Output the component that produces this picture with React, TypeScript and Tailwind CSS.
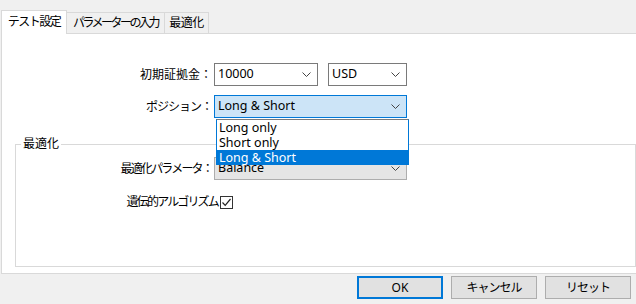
import React from "react";

const Chevron = () => (
  <svg width="9" height="5" viewBox="0 0 9 5" className="shrink-0">
    <path d="M0.5 0.5 L4.5 4.5 L8.5 0.5" fill="none" stroke="#444" strokeWidth="1" />
  </svg>
);

function Combo({ value, width, variant = "normal" }: { value: string; width: number; variant?: "normal" | "focus" | "disabled" }) {
  const cls =
    variant === "focus"
      ? "bg-[#cce4f7] border-[#0078d7]"
      : variant === "disabled"
      ? "bg-[#e5e5e5] border-[#adadad]"
      : "bg-white border-[#7a7a7a]";
  return (
    <div
      className={`h-[23px] border flex items-center justify-between pl-[3px] pr-[6px] ${cls}`}
      style={{ width }}
    >
      <span className="text-[12.5px] text-[#000] leading-none whitespace-nowrap">{value}</span>
      <Chevron />
    </div>
  );
}

export default function App() {
  return (
    <div
      className="w-[636px] h-[304px] bg-[#f0f0f0] overflow-hidden flex flex-col text-black"
      style={{ fontFamily: '"Noto Sans", "Noto Sans CJK JP", sans-serif' }}
    >
      {/* tabs */}
      <div className="h-[33px] flex items-end pl-[1px] relative z-10">
        <div className="h-[24px] w-[66px] bg-white border border-b-0 border-[#d9d9d9] flex items-center justify-center text-[12px] tracking-[-1.5px] whitespace-nowrap -mb-[1px] pb-[2px]">
          テスト設定
        </div>
        <div className="h-[21px] w-[98px] bg-[#f0f0f0] border border-l-0 border-b-0 border-[#d9d9d9] flex items-center justify-center text-[12px] tracking-[-2.5px] whitespace-nowrap">
          パラメーターの入力
        </div>
        <div className="h-[21px] w-[44px] bg-[#f0f0f0] border border-l-0 border-b-0 border-[#d9d9d9] flex items-center justify-center text-[12px] tracking-[-0.5px] whitespace-nowrap">
          最適化
        </div>
      </div>

      {/* panel */}
      <div className="ml-[1px] w-[640px] h-[241px] bg-white border border-[#d9d9d9] relative flex flex-col">
        <div className="pt-[29px] flex flex-col gap-[9px]">
          <div className="flex items-center">
            <div className="w-[212px] text-right text-[12px] pr-[2px] whitespace-nowrap">初期証拠金：</div>
            <Combo value="10000" width={104} />
            <div className="w-[10px]" />
            <Combo value="USD" width={79} />
          </div>
          <div className="flex items-center">
            <div className="w-[212px] text-right text-[12px] pr-[2px] tracking-[-1px] whitespace-nowrap">ポジション：</div>
            <Combo value="Long & Short" width={193} variant="focus" />
          </div>
        </div>

        {/* group box */}
        <div className="mt-[26px] ml-[13px] w-[621px] h-[123px] border border-[#d9d9d9] relative flex flex-col">
          <span className="absolute -top-[9px] left-[5px] bg-white px-[2px] text-[12px] leading-[16px] whitespace-nowrap">最適化</span>
          <div className="mt-[12px] flex items-center">
            <div className="w-[198px] text-right text-[12px] pr-[2px] tracking-[-1.8px] whitespace-nowrap">最適化パラメータ：</div>
            <Combo value="Balance" width={193} variant="disabled" />
          </div>
          <div className="mt-[13px] flex items-center">
            <div className="w-[202px] text-right text-[12px] tracking-[-1.8px] whitespace-nowrap">遺伝的アルゴリズム</div>
            <div className="w-[13px] h-[13px] border border-[#333] bg-white flex items-center justify-center ml-[2px]">
              <svg width="11" height="11" viewBox="0 0 11 11">
                <path d="M1.5 5.5 L4.2 8.3 L9.5 2" fill="none" stroke="#222" strokeWidth="1.2" />
              </svg>
            </div>
          </div>
        </div>

        {/* dropdown list overlay */}
        <div className="absolute left-[214px] top-[85px] w-[193px] h-[46px] bg-white border border-[#0078d7] border-t-[#7a7a7a] z-20 flex flex-col text-[12.5px] leading-[15px]">
          <div className="h-[15px] pl-[2px] whitespace-nowrap">Long only</div>
          <div className="h-[15px] pl-[2px] whitespace-nowrap">Short only</div>
          <div className="h-[15px] pl-[2px] bg-[#0078d7] text-white whitespace-nowrap">Long &amp; Short</div>
        </div>
      </div>

      {/* buttons */}
      <div className="flex justify-end gap-[8px] pr-[5px] pt-[2px]">
        <button className="w-[86px] h-[23px] bg-[#e1e1e1] border-2 border-[#0078d7] text-[12px] flex items-center justify-center">
          OK
        </button>
        <button className="w-[86px] h-[23px] bg-[#e1e1e1] border border-[#adadad] text-[12px] tracking-[-1px] flex items-center justify-center">
          キャンセル
        </button>
        <button className="w-[86px] h-[23px] bg-[#e1e1e1] border border-[#adadad] text-[12px] tracking-[-1px] flex items-center justify-center">
          リセット
        </button>
      </div>
    </div>
  );
}
